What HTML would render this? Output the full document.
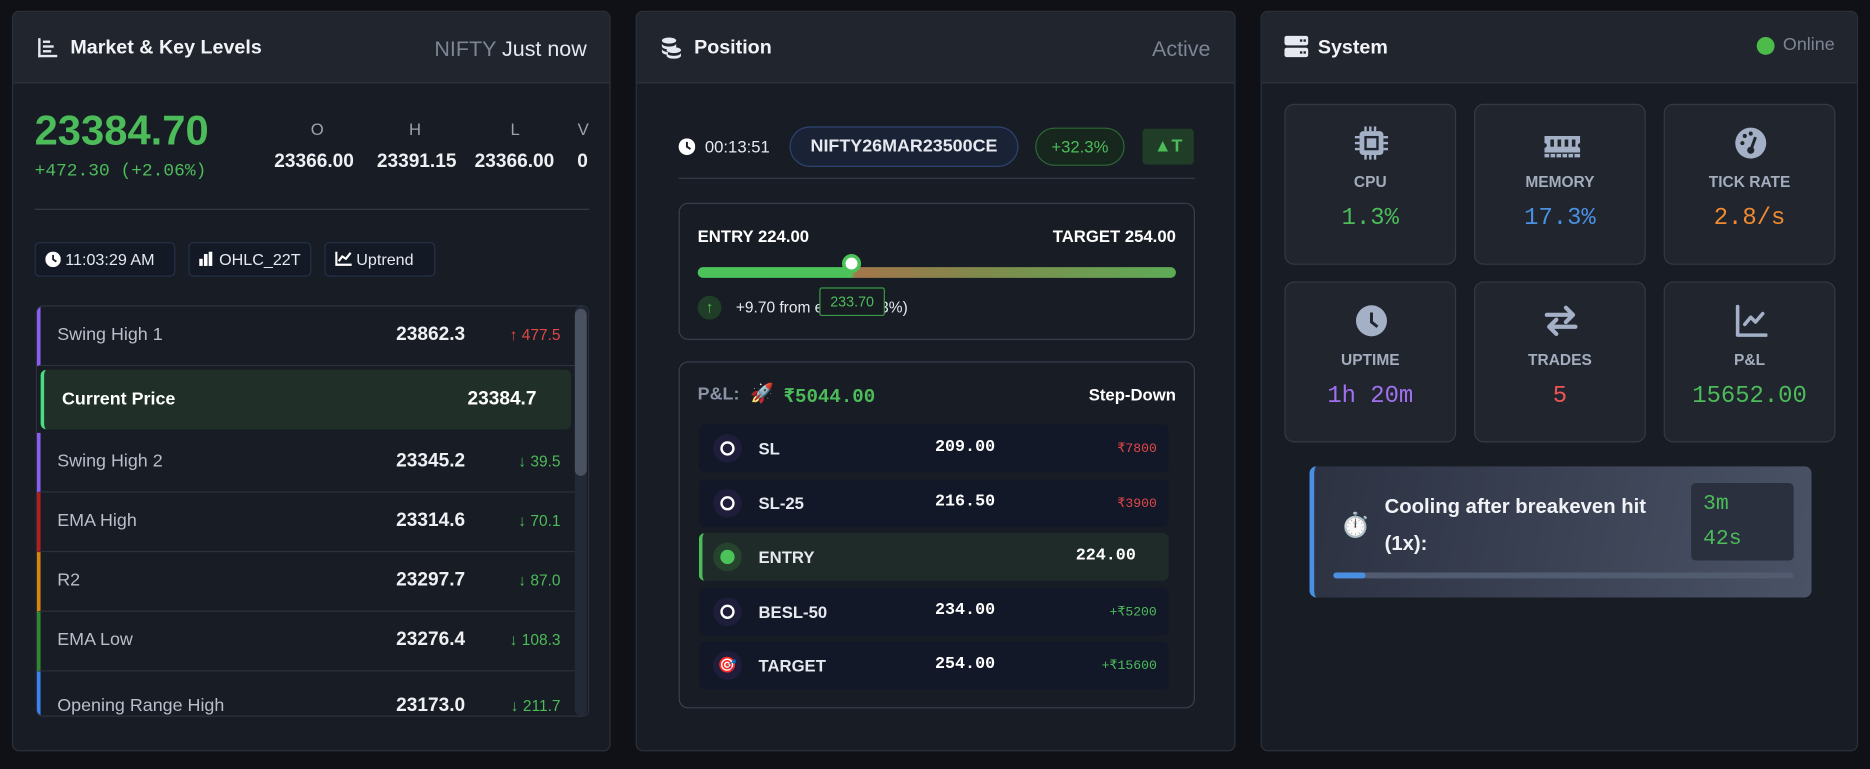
<!DOCTYPE html>
<html><head><meta charset="utf-8"><style>
*{box-sizing:border-box;margin:0;padding:0}
html,body{width:1870px;height:769px;overflow:hidden;background:#0f1117}
#root{position:absolute;left:0;top:0;width:1568px;height:645px;transform:scale(1.19260);transform-origin:0 0;font-family:"Liberation Sans",sans-serif;color:#e6e9ef}
.a{position:absolute}
.panel{position:absolute;top:9px;height:621px;background:#181c24;border:1px solid #2c313b;border-radius:6px;overflow:hidden}
.hdr{position:absolute;left:0;right:0;top:0;height:60px;background:#21252e;border-bottom:1px solid #2f343e}
.title{position:absolute;top:21px;font-size:16.5px;font-weight:bold;color:#f1f3f6}
.mono{font-family:"Liberation Mono",monospace}
.chip{position:absolute;top:202px;height:29px;border:1px solid #263149;border-radius:4px;background:#141a25;font-size:13.5px;color:#e6e9ef;line-height:27px;padding-left:8px}
.row{position:absolute;left:0;right:11px;height:50px;border-bottom:1px solid #2c323d;border-left:3px solid}
.row .l{position:absolute;left:14px;top:15px;font-size:15px;color:#b8bfca}
.row .v{position:absolute;right:92px;top:15px;font-size:16px;font-weight:bold;color:#eef0f4}
.row .d{position:absolute;right:12px;top:16px;font-size:13px;color:#4cbb5a}
.lr{position:absolute;left:16px;width:394px;height:40px;background:#121828;border-radius:5px}
.lr .ic{position:absolute;left:12px;top:8px;width:24px;height:24px;border-radius:50%;background:#1e1e3a}
.lr .ic i{position:absolute;left:6px;top:6px;width:12px;height:12px;border:2px solid #fff;border-radius:50%}
.lr .n{position:absolute;left:50px;top:12px;font-size:14px;font-weight:bold;color:#e6e9ef}
.lr .p{position:absolute;left:198px;top:11px;font-size:14px;font-weight:bold;color:#fff}
.lr .m{position:absolute;right:10px;top:13px;font-size:11px;color:#e04848}
.card{position:absolute;width:144px;height:135px;background:#21252e;border:1px solid #343a45;border-radius:8px;text-align:center}
.card svg{position:absolute;left:58px;top:18px}
.card .cl{position:absolute;left:0;right:0;top:57px;font-size:13px;font-weight:bold;color:#a3adbd}
.card .cv{position:absolute;left:0;right:0;top:84px;font-size:20px}
</style></head><body><div id="root">

<!-- Panel 1 -->
<div class="panel" style="left:10px;width:502px">
 <div class="hdr">
  <svg class="a" style="left:20px;top:21px" width="18" height="18" viewBox="0 0 18 18" fill="#e6e9ef"><rect x="1" y="1" width="2" height="16"/><rect x="1" y="15" width="16" height="2"/><rect x="5" y="3" width="6" height="2"/><rect x="5" y="7" width="9" height="2"/><rect x="5" y="11" width="7" height="2"/></svg>
  <div class="title" style="left:48px">Market &amp; Key Levels</div>
  <div class="a" style="right:19px;top:21px;font-size:18px"><span style="color:#7d8594">NIFTY</span> <span style="color:#e6e9ef">Just now</span></div>
 </div>
 <div class="a" style="left:18px;top:80px;font-size:35px;font-weight:bold;color:#4cbb5a">23384.70</div>
 <div class="a mono" style="left:18px;top:125px;font-size:15px;color:#4cbb5a">+472.30 (+2.06%)</div>
 <div class="a" style="left:220px;top:90px;width:70px;text-align:center;font-size:14px;color:#9aa3b0">O</div>
 <div class="a" style="left:302px;top:90px;width:70px;text-align:center;font-size:14px;color:#9aa3b0">H</div>
 <div class="a" style="left:386px;top:90px;width:70px;text-align:center;font-size:14px;color:#9aa3b0">L</div>
 <div class="a" style="left:471px;top:90px;width:14px;text-align:center;font-size:14px;color:#9aa3b0">V</div>
 <div class="a" style="left:219px;top:117px;font-size:16px;font-weight:bold;color:#eef0f4">23366.00</div>
 <div class="a" style="left:305px;top:117px;font-size:16px;font-weight:bold;color:#eef0f4">23391.15</div>
 <div class="a" style="left:387px;top:117px;font-size:16px;font-weight:bold;color:#eef0f4">23366.00</div>
 <div class="a" style="left:473px;top:117px;font-size:16px;font-weight:bold;color:#eef0f4">0</div>
 <div class="a" style="left:18px;top:165px;width:465px;height:1px;background:#353b46"></div>
 <div class="chip" style="left:18px;width:118px;top:193px"><svg style="vertical-align:-2px" width="13" height="13" viewBox="0 0 14 14"><circle cx="7" cy="7" r="7" fill="#fff"/><path d="M7 3v4l3 2" stroke="#141a25" stroke-width="1.6" fill="none"/></svg> 11:03:29 AM</div>
 <div class="chip" style="left:147px;width:103px;top:193px"><svg style="vertical-align:-1px" width="13" height="12" viewBox="0 0 13 12" fill="#fff"><rect x="0" y="6" width="3" height="6"/><rect x="4" y="2" width="3" height="10"/><rect x="8" y="0" width="3" height="12"/></svg> OHLC_22T</div>
 <div class="chip" style="left:261px;width:93px;top:193px"><svg style="vertical-align:-1px" width="14" height="12" viewBox="0 0 14 12" fill="none" stroke="#fff" stroke-width="1.8"><path d="M1 0v11h13M3 8l3-4 3 2 4-5"/></svg> Uptrend</div>
 <div class="a" style="left:19px;top:246px;width:464px;height:345px;border:1px solid #2c323d;border-radius:6px;overflow:hidden">
  <div class="row" style="top:0;border-left-color:#8b5cf6"><span class="l">Swing High 1</span><span class="v">23862.3</span><span class="d" style="color:#e04848">↑ 477.5</span></div>
  <div class="a" style="left:3px;right:14px;top:53px;height:50px;background:#203028;border-left:3px solid #4ade80;border-radius:5px"><span class="a" style="left:15px;top:16px;font-size:15px;font-weight:bold;color:#fff">Current Price</span><span class="a" style="left:355px;top:16px;font-size:16px;font-weight:bold;color:#fff">23384.7</span></div>
  <div class="row" style="top:106px;border-left-color:#8b5cf6"><span class="l">Swing High 2</span><span class="v">23345.2</span><span class="d">↓ 39.5</span></div>
  <div class="row" style="top:156px;border-left-color:#b91c1c"><span class="l">EMA High</span><span class="v">23314.6</span><span class="d">↓ 70.1</span></div>
  <div class="row" style="top:206px;border-left-color:#d98706"><span class="l">R2</span><span class="v">23297.7</span><span class="d">↓ 87.0</span></div>
  <div class="row" style="top:256px;border-left-color:#2f8a2f"><span class="l">EMA Low</span><span class="v">23276.4</span><span class="d">↓ 108.3</span></div>
  <div class="row" style="top:306px;border-left-color:#3b82f6;border-bottom:0"><span class="l" style="top:20px">Opening Range High</span><span class="v" style="top:20px">23173.0</span><span class="d" style="top:21px">↓ 211.7</span></div>
  <div class="a" style="right:1px;top:0;width:10px;height:343px;background:#222a38;border-radius:5px"></div>
  <div class="a" style="right:1px;top:2px;width:10px;height:140px;background:#4a5161;border-radius:5px"></div>
 </div>
</div>

<!-- Panel 2 -->
<div class="panel" style="left:533px;width:503px">
 <div class="hdr">
  <svg class="a" style="left:20px;top:20px" width="18" height="20" viewBox="0 0 18 20" fill="#e6e9ef"><ellipse cx="7" cy="4" rx="6" ry="2.6"/><path d="M1 6.5c0 1.5 2.7 2.6 6 2.6s6-1.1 6-2.6v2.3c0 1.5-2.7 2.6-6 2.6S1 10.3 1 8.8z"/><ellipse cx="11" cy="12" rx="6" ry="2.5"/><path d="M5 14.3c0 1.4 2.7 2.5 6 2.5s6-1.1 6-2.5v2.4c0 1.4-2.7 2.5-6 2.5s-6-1.1-6-2.5z"/><path d="M1 11c0 1.5 2.7 2.6 5 2.6v2.3c-2.3 0-5-1.1-5-2.6z"/></svg>
  <div class="title" style="left:48px">Position</div>
  <div class="a" style="right:20px;top:21px;font-size:18px;color:#7d8594">Active</div>
 </div>
 <svg class="a" style="left:35px;top:106px" width="14" height="14" viewBox="0 0 14 14"><circle cx="7" cy="7" r="7" fill="#fff"/><path d="M7 3v4l3 2" stroke="#181c24" stroke-width="1.6" fill="none"/></svg>
 <div class="a" style="left:57px;top:105px;font-size:14px;color:#e6e9ef">00:13:51</div>
 <div class="a" style="left:128px;top:96px;width:192px;height:34px;border:1px solid #2d4470;border-radius:17px;background:#1a2336;text-align:center;line-height:32px;font-size:15px;font-weight:bold;color:#e6e9ef">NIFTY26MAR23500CE</div>
 <div class="a" style="left:334px;top:97px;width:75px;height:32px;border:1px solid #2b6a36;border-radius:16px;background:#18271d;text-align:center;line-height:30px;font-size:14px;color:#4cbb5a">+32.3%</div>
 <div class="a" style="left:424px;top:98px;width:43px;height:30px;border-radius:3px;background:#1f3d27;text-align:center;line-height:30px;font-size:15px;font-weight:bold;color:#4cbb5a">▲T</div>
 <div class="a" style="left:35px;top:139px;width:433px;height:1px;background:#353c4a"></div>
 <div class="a" style="left:35px;top:160px;width:433px;height:115px;border:1px solid #3a4050;border-radius:8px">
  <div class="a" style="left:15px;top:19px;font-size:14px;font-weight:bold;color:#fff">ENTRY 224.00</div>
  <div class="a" style="right:15px;top:19px;font-size:14px;font-weight:bold;color:#fff">TARGET 254.00</div>
  <div class="a" style="left:15px;top:53px;width:401px;height:9px;border-radius:5px;background:linear-gradient(90deg,#4cc35a 0,#4cc35a 32%,#a3774a 33%,#7f8a4d 60%,#5eab56 100%)"></div>
  <div class="a" style="left:136px;top:42px;width:16px;height:16px;border-radius:50%;background:#fff;border:3px solid #4cc35a"></div>
  <div class="a" style="left:15px;top:77px;width:20px;height:20px;border-radius:50%;background:#1f3d27;color:#4cbb5a;font-size:13px;text-align:center;line-height:20px;font-weight:bold">↑</div>
  <div class="a" style="left:47px;top:79px;font-size:13px;color:#e6e9ef">+9.70 from entry (32.3%)</div>
  <div class="a" style="left:117px;top:70px;width:55px;height:24px;border:1px solid #3a9a48;border-radius:2px;background:#161c22;text-align:center;line-height:22px;font-size:12px;color:#4cbb5a">233.70</div>
 </div>
 <div class="a" style="left:35px;top:293px;width:433px;height:291px;border:1px solid #3a4050;border-radius:8px">
  <div class="a" style="left:15px;top:18px;font-size:15px;font-weight:bold;color:#8a94a6">P&amp;L:</div>
  <div class="a" style="left:59px;top:16px;font-size:16px">🚀</div>
  <div class="a mono" style="left:87px;top:18px;font-size:16px;font-weight:bold;color:#4cbb5a">₹5044.00</div>
  <div class="a" style="right:15px;top:19px;font-size:14px;font-weight:bold;color:#fff">Step-Down</div>
  <div class="lr" style="top:52px"><div class="ic"><i></i></div><span class="n">SL</span><span class="p mono">209.00</span><span class="m mono">₹7800</span></div>
  <div class="lr" style="top:98px"><div class="ic"><i></i></div><span class="n">SL-25</span><span class="p mono">216.50</span><span class="m mono">₹3900</span></div>
  <div class="lr" style="top:143px;background:#1f2b28;border-left:3px solid #4cbb5a"><div class="ic" style="left:9px;background:#26432e"><i style="background:#4cc35a;border-color:#4cc35a"></i></div><span class="n" style="left:47px">ENTRY</span><span class="p mono" style="left:313px">224.00</span></div>
  <div class="lr" style="top:189px"><div class="ic"><i></i></div><span class="n">BESL-50</span><span class="p mono">234.00</span><span class="m mono" style="color:#4cbb5a">+₹5200</span></div>
  <div class="lr" style="top:234px"><div class="ic" style="font-size:13px;line-height:24px;text-align:center">🎯</div><span class="n">TARGET</span><span class="p mono">254.00</span><span class="m mono" style="color:#4cbb5a">+₹15600</span></div>
 </div>
</div>

<!-- Panel 3 -->
<div class="panel" style="left:1057px;width:501px">
 <div class="hdr">
  <svg class="a" style="left:19px;top:20px" width="20" height="18" viewBox="0 0 20 18"><rect x="0" y="0" width="20" height="8" rx="2" fill="#e6e9ef"/><rect x="0" y="10" width="20" height="8" rx="2" fill="#e6e9ef"/><rect x="13" y="3" width="2" height="2" fill="#21252e"/><rect x="16" y="3" width="2" height="2" fill="#21252e"/><rect x="13" y="13" width="2" height="2" fill="#21252e"/><rect x="16" y="13" width="2" height="2" fill="#21252e"/></svg>
  <div class="title" style="left:47px">System</div>
  <div class="a" style="left:415px;top:21px;width:15px;height:15px;border-radius:50%;background:#4cbb4a"></div>
  <div class="a" style="left:437px;top:19px;font-size:15px;color:#7d8594">Online</div>
 </div>
 <div class="card" style="left:19px;top:77px"><svg width="28" height="28" viewBox="0 0 28 28" fill="#a3b0c6"><rect x="4" y="4" width="20" height="20" rx="3"/><rect x="8" y="8" width="12" height="12" fill="#21252e"/><rect x="10" y="10" width="8" height="8"/><path d="M8 0h2v4H8zM12 0h2v4h-2zM16 0h2v4h-2zM8 24h2v4H8zM12 24h2v4h-2zM16 24h2v4h-2zM0 8h4v2H0zM0 13h4v2H0zM0 18h4v2H0zM24 8h4v2h-4zM24 13h4v2h-4zM24 18h4v2h-4z"/></svg><div class="cl">CPU</div><div class="cv mono" style="color:#4cbb5a">1.3%</div></div>
 <div class="card" style="left:178px;top:77px"><svg width="30" height="28" viewBox="0 0 30 28" fill="#a3b0c6"><path d="M0 8h30v6a2 2 0 0 0 0 4v4H0v-4a2 2 0 0 0 0-4z"/><rect x="5" y="11" width="3" height="6" fill="#21252e"/><rect x="11" y="11" width="3" height="6" fill="#21252e"/><rect x="17" y="11" width="3" height="6" fill="#21252e"/><rect x="23" y="11" width="3" height="6" fill="#21252e"/><rect x="0" y="22" width="30" height="1" fill="#21252e"/><path d="M0 23h30v3H0z"/><rect x="4" y="23" width="1.2" height="3" fill="#21252e"/><rect x="9" y="23" width="1.2" height="3" fill="#21252e"/><rect x="14" y="23" width="1.2" height="3" fill="#21252e"/><rect x="19" y="23" width="1.2" height="3" fill="#21252e"/><rect x="24" y="23" width="1.2" height="3" fill="#21252e"/></svg><div class="cl">MEMORY</div><div class="cv mono" style="color:#4a90e2">17.3%</div></div>
 <div class="card" style="left:337px;top:77px"><svg width="28" height="28" viewBox="0 0 28 28"><circle cx="14" cy="14" r="13" fill="#a3b0c6"/><circle cx="14" cy="20" r="3" fill="#21252e"/><path d="M14 20l4-11" stroke="#21252e" stroke-width="2.5"/><circle cx="7" cy="14" r="1.7" fill="#21252e"/><circle cx="9" cy="8" r="1.7" fill="#21252e"/><circle cx="14" cy="6" r="1.7" fill="#21252e"/></svg><div class="cl">TICK RATE</div><div class="cv mono" style="color:#f08a30">2.8/s</div></div>
 <div class="card" style="left:19px;top:226px"><svg width="28" height="28" viewBox="0 0 28 28"><circle cx="14" cy="14" r="13" fill="#a3b0c6"/><path d="M14 7v8l5 4" stroke="#21252e" stroke-width="2.5" fill="none"/></svg><div class="cl">UPTIME</div><div class="cv mono" style="color:#a070f0">1h 20m</div></div>
 <div class="card" style="left:178px;top:226px"><svg width="28" height="28" viewBox="0 0 28 28" fill="none" stroke="#a3b0c6" stroke-width="3.5" stroke-linecap="round" stroke-linejoin="round"><path d="M2 9h22M18 3l6 6-6 6M26 19H4M10 13l-6 6 6 6"/></svg><div class="cl">TRADES</div><div class="cv mono" style="color:#f05555">5</div></div>
 <div class="card" style="left:337px;top:226px"><svg width="28" height="28" viewBox="0 0 28 28" fill="none" stroke="#a3b0c6" stroke-width="3" stroke-linecap="round" stroke-linejoin="round"><path d="M3 2v24h24M9 17l5-6 4 4 6-7"/></svg><div class="cl">P&amp;L</div><div class="cv mono" style="color:#4cbb5a">15652.00</div></div>
 <div class="a" style="left:40px;top:381px;width:421px;height:110px;border-radius:6px;border-left:4px solid #4a90e2;background:linear-gradient(100deg,#2c3242,#4a5266)">
  <div class="a" style="left:22px;top:37px;font-size:20px">⏱️</div>
  <div class="a" style="left:59px;top:18px;width:240px;font-size:17px;font-weight:bold;line-height:31px;color:#f1f3f6">Cooling after breakeven hit (1x):</div>
  <div class="a mono" style="left:316px;top:14px;width:86px;height:65px;border-radius:4px;background:#2a303e;padding:4px 10px;font-size:18px;line-height:29px;color:#4cbb5a">3m<br>42s</div>
  <div class="a" style="left:16px;top:89px;width:386px;height:5px;border-radius:3px;background:#525c70"><div style="width:27px;height:5px;border-radius:3px;background:#4a90e2"></div></div>
 </div>
</div>
</div></body></html>
